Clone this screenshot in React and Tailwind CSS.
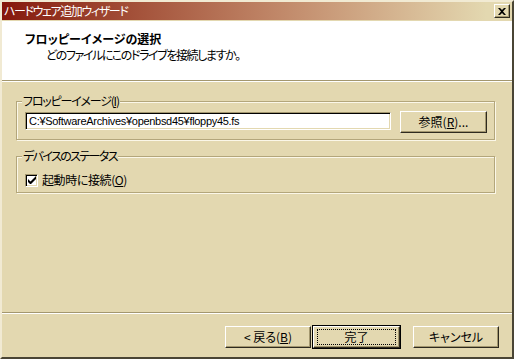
const jp = "font-['Noto_Sans_CJK_JP','Noto_Sans',sans-serif] [font-feature-settings:'palt']";

const raised =
  "border border-t-white border-l-white border-r-[#2e2a1f] border-b-[#2e2a1f] shadow-[inset_-1px_-1px_0_#a3976f]";

function Btn({ children, className = "", focus = false }) {
  return (
    <button
      className={`${raised} bg-[#e3d8b0] h-[22px] flex items-center justify-center text-[12px] leading-[14px] text-black ${className}`}
    >
      {focus ? (
        <span className="flex items-center justify-center w-[calc(100%-8px)] h-[14px] outline outline-1 outline-dotted outline-black">
          {children}
        </span>
      ) : (
        children
      )}
    </button>
  );
}

function GroupBox({ label, children, className = "", labelClass = "" }) {
  return (
    <fieldset
      className={`border border-[#b3a67b] shadow-[inset_1px_1px_0_#fbf7e8,1px_1px_0_#fbf7e8] ml-[14px] w-[479px] pl-[8px] pr-[6px] ${className}`}
    >
      <legend className={`ml-[-3px] px-[1px] bg-[#e3d8b0] text-[12px] leading-[14px] text-black ${labelClass}`}>
        {label}
      </legend>
      {children}
    </fieldset>
  );
}

export default function App() {
  return (
    <div
      className={`${jp} w-[514px] h-[359px] bg-[#e3d8b0] border-2 border-t-[#f1ead3] border-l-[#f1ead3] border-r-[#4a4535] border-b-[#4a4535] flex flex-col select-none`}
    >
      {/* title bar */}
      <div className="h-[18px] flex items-center justify-between pl-[2px] pr-[2px] bg-linear-to-r from-[#85150a] via-[#c1896a] via-55% to-[#e3d8b0] to-95%">
        <span className="text-white text-[12px] leading-[14px] tracking-[-1.4px]">ハードウェア追加ウィザード</span>
        <div className={`${raised} w-[16px] h-[14px] bg-[#e3d8b0] flex items-center justify-center`}>
          <svg width="8" height="7" viewBox="0 0 8 7">
            <path d="M0 0h2l2 2 2-2h2L5 3.5 8 7H6L4 5 2 7H0l3-3.5z" fill="#000" />
          </svg>
        </div>
      </div>

      {/* header */}
      <div className="mt-[1px] h-[59px] bg-white pl-[23px] pt-[11px]">
        <div className="text-[12px] leading-[14px] font-bold text-black">フロッピーイメージの選択</div>
        <div className="ml-[21px] mt-[2px] text-[12px] leading-[14px] tracking-[-1.4px] text-black">
          どのファイルにこのドライブを接続しますか。
        </div>
      </div>
      <div className="h-[1px] bg-[#a3976f]" />
      <div className="h-[1px] bg-white" />

      {/* body */}
      <div className="flex-1 flex flex-col pt-[12px]">
        <GroupBox
          label={<>フロッピーイメージ(<u>I</u>)</>}
          labelClass="tracking-[-1.2px]"
          className="pt-[3px] pb-[6px]"
        >
          <div className="flex items-start">
            <div className="mt-[1px] w-[366px] h-[18px] bg-white border border-t-[#a3976f] border-l-[#a3976f] border-r-white border-b-white shadow-[inset_1px_1px_0_#000,inset_-1px_-1px_0_#e3d8b0] flex items-center pl-[3px]">
              <span className="font-['Liberation_Sans','Noto_Sans_CJK_JP',sans-serif] text-[11px] leading-[14px] tracking-[-0.3px] text-black">
                C:¥SoftwareArchives¥openbsd45¥floppy45.fs
              </span>
            </div>
            <Btn className="ml-[9px] w-[87px]">
              参照(<u>R</u>)...
            </Btn>
          </div>
        </GroupBox>

        <GroupBox
          label="デバイスのステータス"
          labelClass="tracking-[-1.6px]"
          className="mt-[9px] pt-[10px] pb-[5px]"
        >
          <label className="flex items-center">
            <span className="w-[13px] h-[13px] bg-white border border-t-[#a3976f] border-l-[#a3976f] border-r-white border-b-white shadow-[inset_1px_1px_0_#000,inset_-1px_-1px_0_#e3d8b0] flex items-center justify-center">
              <svg width="8" height="8" viewBox="0 0 8 8">
                <path d="M0 3v3l2.5 2.5L8 3V0L2.5 5.5z" fill="#000" />
              </svg>
            </span>
            <span className="ml-[4px] text-[12px] leading-[14px] tracking-[-0.4px] text-black">
              起動時に接続(<u>O</u>)
            </span>
          </label>
        </GroupBox>

        <div className="flex-1" />
        <div className="h-[1px] bg-[#a3976f]" />
        <div className="h-[1px] bg-white" />

        <div className="flex justify-end items-center pt-[11px] pb-[8px] pr-[13px]">
          <Btn className="w-[86px]">
            &lt; 戻る(<u>B</u>)
          </Btn>
          <div className="ml-[1px] border border-black">
            <Btn className="w-[87px] h-[22px]" focus>
              完了
            </Btn>
          </div>
          <Btn className="ml-[12px] w-[86px]">キャンセル</Btn>
        </div>
      </div>
    </div>
  );
}
